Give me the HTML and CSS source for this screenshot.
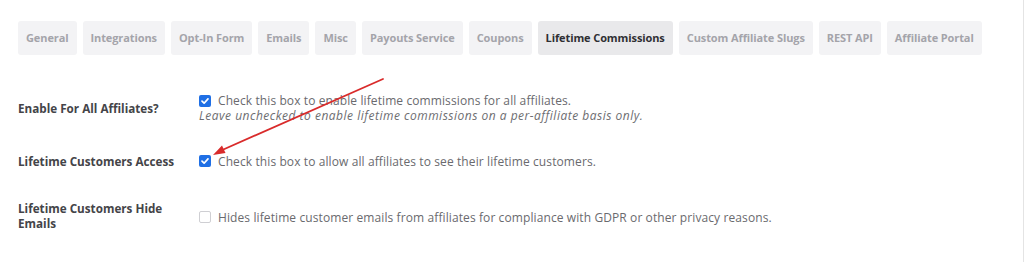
FILE: index.html
```html
<!DOCTYPE html>
<html>
<head>
<meta charset="utf-8">
<link rel="stylesheet" href="styles.css">
</head>
<body>
<div class="page">
  <nav class="tabs">
    <span class="tab">General</span>
    <span class="tab">Integrations</span>
    <span class="tab">Opt-In Form</span>
    <span class="tab">Emails</span>
    <span class="tab">Misc</span>
    <span class="tab">Payouts Service</span>
    <span class="tab">Coupons</span>
    <span class="tab active">Lifetime Commissions</span>
    <span class="tab">Custom Affiliate Slugs</span>
    <span class="tab">REST API</span>
    <span class="tab">Affiliate Portal</span>
  </nav>
  <div class="form">
    <div class="row">
      <div class="label">Enable For All Affiliates?</div>
      <div class="field">
        <div class="line"><span class="cb checked"><svg viewBox="0 0 12 12" width="12" height="12"><path d="M3 6.2 L5.1 8.2 L9 3.9" fill="none" stroke="#fff" stroke-width="1.7" stroke-linecap="round" stroke-linejoin="round"/></svg></span>Check this box to enable lifetime commissions for all affiliates.</div>
        <div class="note">Leave unchecked to enable lifetime commissions on a per-affiliate basis only.</div>
      </div>
    </div>
    <div class="row">
      <div class="label">Lifetime Customers Access</div>
      <div class="field">
        <div class="line"><span class="cb checked"><svg viewBox="0 0 12 12" width="12" height="12"><path d="M3 6.2 L5.1 8.2 L9 3.9" fill="none" stroke="#fff" stroke-width="1.7" stroke-linecap="round" stroke-linejoin="round"/></svg></span>Check this box to allow all affiliates to see their lifetime customers.</div>
      </div>
    </div>
    <div class="row row-last">
      <div class="label label-wrap">Lifetime Customers Hide<br>Emails</div>
      <div class="field field-low">
        <div class="line"><span class="cb"></span>Hides lifetime customer emails from affiliates for compliance with GDPR or other privacy reasons.</div>
      </div>
    </div>
  </div>
  <svg class="arrow" width="1024" height="262" viewBox="0 0 1024 262">
    <line x1="383" y1="79" x2="220" y2="151" stroke="#d92b2b" stroke-width="1.8" stroke-linecap="round"/>
    <path d="M213 155 L222 145.5 L225.5 153 Z" fill="#d92b2b"/>
  </svg>
</div>
</body>
</html>
```
FILE: styles.css
```css
html, body {
  margin: 0;
  padding: 0;
  background: #fff;
}
.page {
  position: relative;
  width: 1023px;
  height: 262px;
  border-right: 1px solid #e4e4e4;
  box-sizing: content-box;
  font-family: "Open Sans", "Noto Sans", sans-serif;
  overflow: hidden;
}
.tabs {
  display: flex;
  gap: 6px;
  padding: 21px 0 0 18px;
}
.tab {
  height: 34px;
  line-height: 34px;
  padding: 0 8px;
  background: #f3f3f5;
  border-radius: 3px;
  color: #a4a4aa;
  font-size: 11px;
  font-weight: 700;
  letter-spacing: -0.1px;
  white-space: nowrap;
}
.tab.active {
  background: #e9e9eb;
  color: #2f2f33;
}
.form {
  padding: 23px 0 0 18px;
}
.row {
  display: grid;
  grid-template-columns: 181px 1fr;
  align-items: center;
  padding: 15px 0;
}
.row-last {
  padding-top: 17px;
}
.label {
  font-size: 11.7px;
  font-weight: 700;
  color: #444448;
  line-height: 16px;
}
.label-wrap {
  line-height: 15px;
}
.field {
  font-size: 12px;
  letter-spacing: 0.1px;
  color: #6a6a6e;
  line-height: 15px;
}
.field-low {
  padding-top: 2px;
}
.line {
  display: flex;
  align-items: center;
}
.note {
  font-style: italic;
  letter-spacing: 0.5px;
  color: #6d6d71;
}
.cb {
  width: 12px;
  height: 12px;
  box-sizing: border-box;
  border-radius: 2px;
  margin-right: 7px;
  flex: none;
  display: flex;
  border: 1px solid #cfcfd3;
  background: #fff;
}
.cb.checked {
  border: none;
  background: #1f6fe5;
}
.arrow {
  position: absolute;
  left: 0;
  top: 0;
  pointer-events: none;
}
```
